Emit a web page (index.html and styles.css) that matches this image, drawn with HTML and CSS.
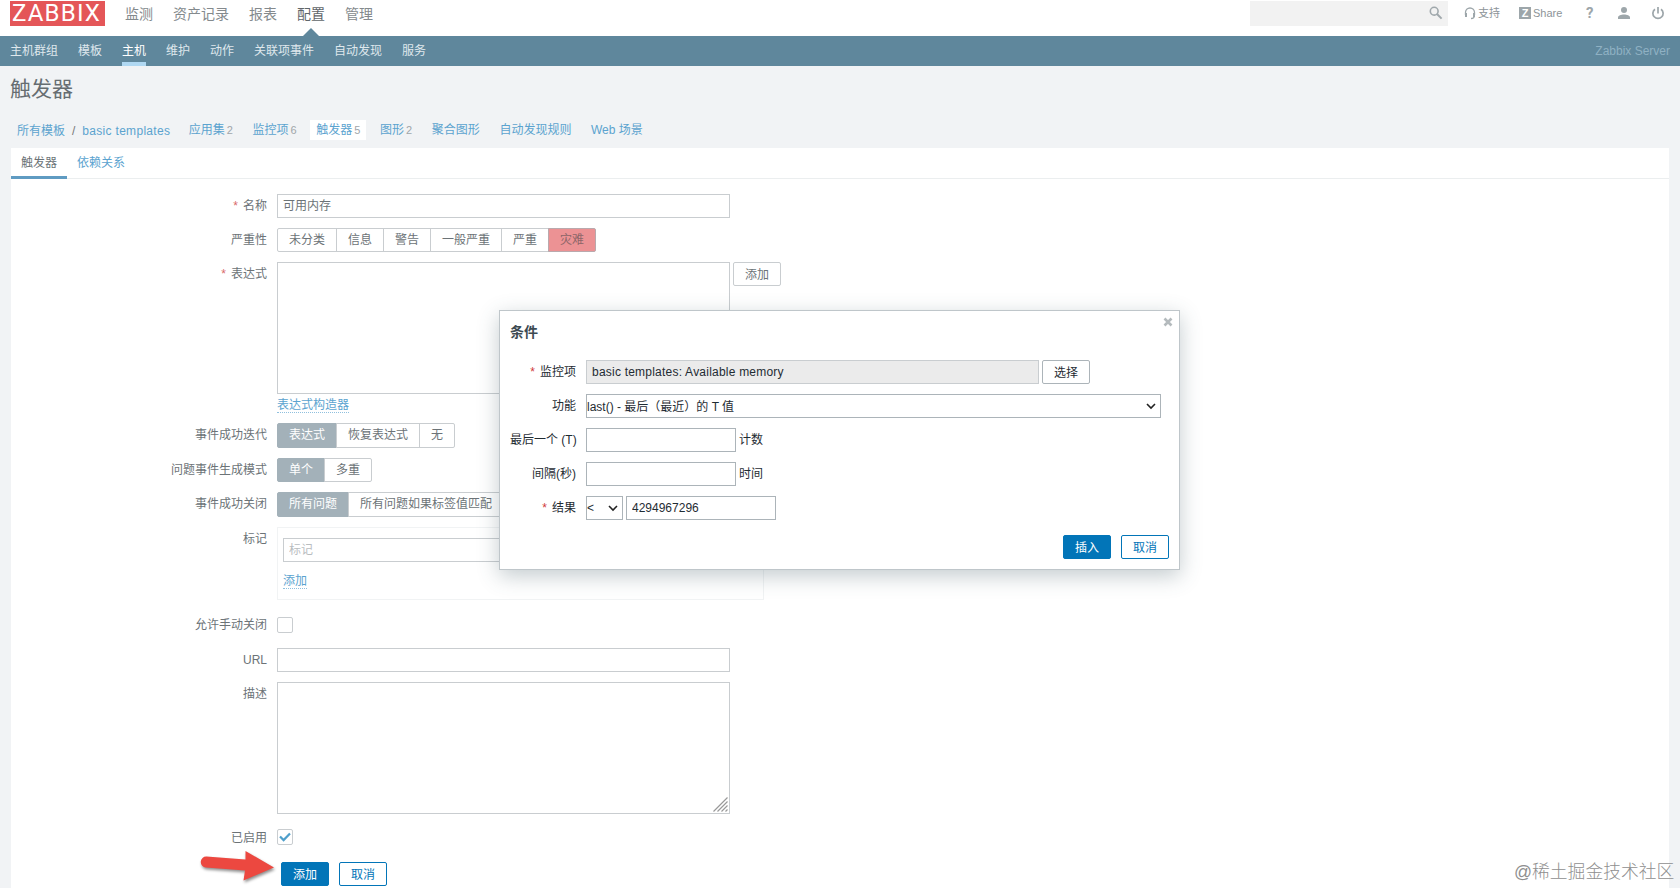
FILE: index.html
```html
<!DOCTYPE html>
<html lang="zh-CN">

<head>
    <meta charset="UTF-8">
    <meta name="viewport" content="width=device-width, initial-scale=1.0">
    <title>触发器</title>
    <link rel="stylesheet" href="styles.css">
</head>

<body>
    <header class="top">
        <div class="logo">ZABBIX</div>
        <nav class="main-nav">
            <a>监测</a>
            <a>资产记录</a>
            <a>报表</a>
            <a class="selected">配置</a>
            <a>管理</a>
        </nav>
        <div class="search">
            <svg width="14" height="14" viewBox="0 0 14 14" fill="none" stroke="#a0a8ac">
                <circle cx="5.2" cy="5.2" r="3.9" stroke-width="1.6" />
                <path d="M8 8l4.6 4.6" stroke-width="2" />
            </svg>
        </div>
        <div class="tools">
            <a class="support">
                <svg width="12" height="13" viewBox="0 0 12 13" fill="none" stroke="#9da6aa">
                    <path d="M1.5 8V5.5a4.5 4.5 0 0 1 9 0V8M10.4 8.500c0 2-1 3-3.400 3" stroke-width="1.300" />
                    <path d="M2 6v4M10 6v4" stroke-width="2" />
                </svg>支持</a>
            <a class="share"><span class="z-box">Z</span>Share</a>
            <a class="help">?</a>
            <a class="user">
                <svg width="12" height="12" viewBox="0 0 12 12" fill="#9da6aa">
                    <circle cx="6" cy="3" r="3" />
                    <path d="M0 12v-1.500c0-2 3-3 6-3s6 1 6 3V12z" />
                </svg>
            </a>
            <a class="power">
                <svg width="12" height="13" viewBox="0 0 12 13" fill="none" stroke="#9da6aa" stroke-width="1.700">
                    <path d="M6 0v6.500M3 2.200a5.100 5.100 0 1 0 6 0" />
                </svg>
            </a>
        </div>
    </header>

    <nav class="sub-nav">
        <a>主机群组</a>
        <a>模板</a>
        <a class="selected">主机</a>
        <a>维护</a>
        <a>动作</a>
        <a>关联项事件</a>
        <a>自动发现</a>
        <a>服务</a>
        <span class="server-name">Zabbix Server</span>
    </nav>

    <h1>触发器</h1>

    <div class="crumbs">
        <span class="path"><a>所有模板</a><i>/</i><a class="lat">basic templates</a></span>
        <span class="crumb"><a>应用集</a><sup>2</sup></span>
        <span class="crumb"><a>监控项</a><sup>6</sup></span>
        <span class="crumb selected"><a>触发器</a><sup>5</sup></span>
        <span class="crumb"><a>图形</a><sup>2</sup></span>
        <span class="crumb"><a>聚合图形</a></span>
        <span class="crumb"><a>自动发现规则</a></span>
        <span class="crumb"><a class="web">Web 场景</a></span>
    </div>

    <main class="panel">
        <div class="tabs">
            <a class="selected">触发器</a>
            <a>依赖关系</a>
        </div>

        <div class="form">
            <label class="required">名称</label>
            <div class="field"><input class="text wide" value="可用内存"></div>

            <label>严重性</label>
            <div class="field radio">
                <span>未分类</span><span>信息</span><span>警告</span><span>一般严重</span><span>严重</span><span class="disaster">灾难</span>
            </div>

            <label class="required">表达式</label>
            <div class="field expression">
                <div class="with-button">
                    <textarea class="text wide"></textarea>
                    <button class="btn grey">添加</button>
                </div>
                <a class="action">表达式构造器</a>
            </div>

            <label>事件成功迭代</label>
            <div class="field radio tall">
                <span class="on">表达式</span><span>恢复表达式</span><span>无</span>
            </div>

            <label>问题事件生成模式</label>
            <div class="field radio">
                <span class="on">单个</span><span>多重</span>
            </div>

            <label>事件成功关闭</label>
            <div class="field radio tall">
                <span class="on">所有问题</span><span>所有问题如果标签值匹配</span>
            </div>

            <label>标记</label>
            <div class="field tags">
                <input class="text" placeholder="标记">
                <a class="action">添加</a>
            </div>

            <label class="check-label">允许手动关闭</label>
            <div class="field check-row first"><span class="check"></span></div>

            <label>URL</label>
            <div class="field"><input class="text wide"></div>

            <label>描述</label>
            <div class="field description">
                <textarea class="text wide"></textarea>
                <svg class="grip" width="15" height="15" viewBox="0 0 15 15" stroke="#999" stroke-width="1.200">
                    <path d="M.5 14.500l14-14M4.500 14.500l10-10M8.500 14.500l6-6M12.500 14.500l2-2" />
                </svg>
            </div>

            <label class="check-label enabled">已启用</label>
            <div class="field check-row">
                <span class="check">
                    <svg width="12" height="10" viewBox="0 0 12 10" fill="none" stroke="#4f9fcb" stroke-width="2.200">
                        <path d="M1 4.500l3.600 3.600L11 1.500" />
                    </svg>
                </span>
            </div>

            <div class="field footer">
                <button class="btn primary">添加</button>
                <button class="btn">取消</button>
            </div>
        </div>
    </main>

    <svg class="arrow" width="80" height="40" viewBox="0 0 80 40">
        <path fill="#ec4840" d="M7.500 6.500L46.500 9.500V1L75 17.500L44.500 30.500L46 20.500L7 17.500A5.500 5.500 0 0 1 7.500 6.500Z" />
    </svg>

    <div class="dialog">
        <svg class="close" width="10" height="10" viewBox="0 0 10 10" stroke="#b4babd" stroke-width="2.600">
            <path d="M1.500 1.500l7 7M8.500 1.500l-7 7" />
        </svg>
        <h4>条件</h4>
        <div class="dialog-form">
            <label class="required">监控项</label>
            <div class="line">
                <input class="text wide" value="basic templates: Available memory" readonly>
                <button class="btn dark">选择</button>
            </div>

            <label>功能</label>
            <div class="select function">
                <span>last() - 最后（最近）的 T 值</span>
                <svg width="10" height="7" viewBox="0 0 10 7" fill="none" stroke="#222" stroke-width="1.600"><path d="M1 1l4 4 4-4" /></svg>
            </div>

            <label>最后一个 (T)</label>
            <div class="line"><input class="text short">计数</div>

            <label>间隔(秒)</label>
            <div class="line"><input class="text short">时间</div>

            <label class="required">结果</label>
            <div class="line">
                <div class="select operator">
                    <span>&lt;</span>
                    <svg width="10" height="7" viewBox="0 0 10 7" fill="none" stroke="#222" stroke-width="1.600"><path d="M1 1l4 4 4-4" /></svg>
                </div>
                <input class="text short" value="4294967296">
            </div>
        </div>
        <div class="dialog-footer">
            <button class="btn primary">插入</button>
            <button class="btn">取消</button>
        </div>
    </div>

    <div class="watermark">@稀土掘金技术社区</div>
</body>

</html>
```

FILE: styles.css
```css
* {
    box-sizing: border-box;
}

body {
    margin: 0;
    height: 888px;
    overflow: hidden;
    background-color: #f1f3f5;
    color: #6c7377;
    font: 12px/24px "Liberation Sans", "Noto Sans CJK SC", sans-serif;
    position: relative;
    display: flex;
    flex-direction: column;
}

input,
textarea,
button {
    font: inherit;
    color: inherit;
    margin: 0;
}

/* header */
.top {
    height: 36px;
    flex: none;
    background-color: #fff;
    display: flex;
    align-items: flex-start;
    padding: 1px 16px 0 10px;
}

.logo {
    width: 95px;
    height: 25px;
    background-color: #e45658;
    color: #fff;
    font: 24px/25px Roboto, sans-serif;
    letter-spacing: 1.2px;
    padding-left: 2px;
    white-space: nowrap;
}

.main-nav {
    display: flex;
    gap: 20px;
    margin-left: 20px;
    font-size: 14px;
    line-height: 27px;
    color: #848a8d;

    & .selected {
        color: #5f666a;
        position: relative;
    }

    & .selected::after {
        content: "";
        position: absolute;
        left: 6px;
        top: 27px;
        border: 8px solid transparent;
        border-top: 0;
        border-bottom-color: #5f879c;
    }
}

.search {
    width: 198px;
    height: 25px;
    margin-left: auto;
    background-color: #f2f2f2;
    display: flex;
    justify-content: flex-end;
    padding: 5px 5px 0 0;
}

.tools {
    display: flex;
    width: 200px;
    margin-left: 16px;
    height: 24px;
    align-items: center;
    color: #8d9498;

    & a {
        display: flex;
        align-items: center;
    }
}

.support {
    width: 55px;
    gap: 2px;
    font-size: 11px;
}

.share {
    width: 67px;
    gap: 2px;
    font-size: 11px;
}

.z-box {
    width: 12px;
    height: 12px;
    background-color: #9da6aa;
    color: #fff;
    font: bold 11px/12px "Liberation Sans", sans-serif;
    text-align: center;
}

.help {
    width: 32px;
    font: bold 15px/24px Roboto, sans-serif;
    color: #9da6aa;
}

.user {
    width: 34px;
}

.sub-nav {
    height: 30px;
    flex: none;
    background-color: #5f879c;
    color: #dfe8ed;
    display: flex;
    gap: 20px;
    padding: 0 10px;
    line-height: 30px;

    & .selected {
        color: #fff;
        border-bottom: 4px solid #b0d8f2;
    }

    & .server-name {
        margin-left: auto;
        color: #8fb1c3;
    }
}

h1 {
    margin: 0;
    padding: 8px 10px 0;
    height: 54px;
    flex: none;
    font-size: 21px;
    line-height: 30px;
    font-weight: normal;
    color: #666d71;
}

.crumbs {
    height: 28px;
    flex: none;
    display: flex;
    gap: 7.6px;
    padding-left: 17px;
    line-height: 20px;
    color: #5ba3cf;

    & i {
        font-style: normal;
        color: #777;
        margin: 0 7px;
    }

    & sup {
        font-size: 11px;
        line-height: 18px;
        vertical-align: baseline;
        color: #9fa6aa;
        margin-left: 2px;
    }
}

.path {
    line-height: 22px;
    margin-right: 5px;
}

.lat {
    letter-spacing: .3px;
}

.crumb {
    height: 20px;
    padding: 0 6px;

    &.selected {
        background-color: #fff;
    }
}

/* content */
.panel {
    flex: 1;
    margin: 0 11px;
    background-color: #fff;
}

.tabs {
    display: flex;
    height: 31px;
    border-bottom: 1px solid #ebeeef;
    line-height: 30px;
    color: #5ba3cf;

    & a {
        height: 31px;
        padding: 0 10px;
    }

    & .selected {
        color: #6c7377;
        border-bottom: 3px solid #5f9bc2;
    }
}

.form {
    display: grid;
    grid-template-columns: 256px 1fr;
    column-gap: 10px;
    row-gap: 10px;
    padding-top: 15px;

    & label {
        text-align: right;
        line-height: 24px;
    }

    & .footer {
        grid-column: 2;
        display: flex;
        gap: 10px;
        padding-left: 4px;
    }

    & .check-label {
        height: 28px;
        line-height: 30px;
    }

    & .enabled {
        line-height: 28px;
    }
}

.required::before {
    content: "*";
    color: #d96a6a;
    margin-right: 5px;
}

.text {
    display: block;
    height: 24px;
    padding: 0 5px;
    border: 1px solid #c9cdd0;
    background-color: #fff;
    border-radius: 0;
    outline: none;
    resize: none;
}

.text::placeholder {
    color: #b9bdbf;
}

.wide {
    width: 453px;
}

textarea.text {
    height: 132px;
}

.btn {
    height: 24px;
    width: 48px;
    padding: 2px 0 0;
    line-height: 20px;
    border: 1px solid #0275b8;
    border-radius: 2px;
    background-color: #fff;
    color: #0275b8;

    &.primary {
        background-color: #0275b8;
        color: #fff;
    }

    &.grey {
        border-color: #c9cdd0;
        color: #6c7377;
    }

    &.dark {
        border-color: #acb4b9;
        color: #1f2c33;
    }
}

.radio {
    display: flex;
    height: 24px;

    & span {
        border: 1px solid #c9cdd0;
        padding: 0 11px;
        line-height: 22px;
    }

    & span + span {
        margin-left: -1px;
    }

    & span:first-child {
        border-radius: 2px 0 0 2px;
    }

    & span:last-child {
        border-radius: 0 2px 2px 0;
    }

    & .on {
        background-color: #a3b1b9;
        border-color: #a3b1b9;
        color: #fff;
    }

    & .disaster {
        background-color: #ec9294;
        border-color: #b9a9ad;
        color: #8d6568;
    }
}

.tall {
    height: 25px;

    & span {
        line-height: 23px;
    }
}

.expression {
    height: 151px;
}

.with-button {
    display: flex;
    gap: 3px;
}

.action {
    display: block;
    width: fit-content;
    height: 19px;
    line-height: 22px;
    color: #5ba3cf;
    border-bottom: 1px dotted #8fc0de;
}

.tags {
    width: 487px;
    height: 73px;
    padding: 10px 5px;
    border: 1px solid #f1f3f4;

    & .text {
        width: 300px;
        margin-bottom: 8px;
    }
}

.check-row {
    height: 28px;
    padding-top: 5px;

    &.first {
        padding-top: 7px;
    }
}

.check {
    display: flex;
    align-items: center;
    justify-content: center;
    width: 16px;
    height: 16px;
    border: 1px solid #c9cdd0;
    border-radius: 2px;
}

.description {
    position: relative;
}

.grip {
    position: absolute;
    left: 436px;
    top: 115px;
}

.arrow {
    position: absolute;
    left: 199px;
    top: 850px;
    filter: drop-shadow(1px 2px 1.5px rgba(0, 0, 0, .45));
}

/* condition popup */
.dialog {
    position: absolute;
    left: 499px;
    top: 310px;
    width: 681px;
    height: 260px;
    padding: 9px 10px 10px;
    border: 1px solid #bfc6ca;
    background-color: #fff;
    box-shadow: 0 6px 20px rgba(60, 85, 95, .3);
    color: #1f2c33;

    & h4 {
        margin: 0 0 16px;
        font-size: 14px;
        line-height: 24px;
        color: #3c4a52;
    }

    & .text {
        border-color: #acb4b9;
    }

    & .text[readonly] {
        background-color: #ebebeb;
        border-color: #c9cdd0;
        letter-spacing: .22px;
    }

    & .required::before {
        color: #d03a3a;
    }
}

.close {
    position: absolute;
    left: 663px;
    top: 6px;
}

.dialog-form {
    display: grid;
    grid-template-columns: 66px 1fr;
    gap: 10px;

    & label {
        text-align: right;
        line-height: 24px;
        white-space: nowrap;
    }
}

.line {
    display: flex;
    gap: 3px;
    line-height: 24px;
}

.short {
    width: 150px;
}

.select {
    display: flex;
    align-items: center;
    justify-content: space-between;
    height: 24px;
    border: 1px solid #acb4b9;
    line-height: 22px;
}

.function {
    width: 575px;
    padding: 1px 4px 0 0;
}

.operator {
    width: 37px;
    padding: 0 4px 0 0;
}

.dialog-footer {
    display: flex;
    justify-content: flex-end;
    gap: 10px;
    margin-top: 15px;
}

.watermark {
    position: absolute;
    left: 1514px;
    top: 860px;
    font-size: 17.8px;
    font-weight: 300;
    color: #8f8f8f;
    white-space: nowrap;
}
```
